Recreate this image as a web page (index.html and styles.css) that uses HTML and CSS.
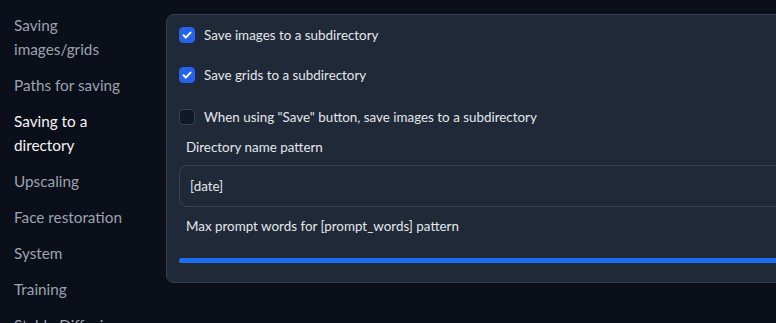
FILE: index.html
```html
<!DOCTYPE html>
<html lang="en">
<head>
    <meta charset="UTF-8">
    <title>Settings - Saving to a directory</title>
    <link rel="stylesheet" href="styles.css">
</head>
<body>
    <div class="layout">
        <!-- Side menu of the settings sections -->
        <nav class="sidebar">
            <div class="nav-item">Saving images/grids</div>
            <div class="nav-item">Paths for saving</div>
            <div class="nav-item active">Saving to a directory</div>
            <div class="nav-item">Upscaling</div>
            <div class="nav-item">Face restoration</div>
            <div class="nav-item">System</div>
            <div class="nav-item">Training</div>
            <div class="nav-item">Stable Diffusion</div>
        </nav>

        <!-- Settings panel -->
        <section class="panel">
            <label class="check-row">
                <span class="box checked">
                    <svg viewBox="0 0 16 16" width="16" height="16"><path d="M4.5 8.3l2.3 2.3 4.7-5" fill="none" stroke="#fff" stroke-width="2" stroke-linecap="round" stroke-linejoin="round"/></svg>
                </span>
                <span>Save images to a subdirectory</span>
            </label>
            <label class="check-row">
                <span class="box checked">
                    <svg viewBox="0 0 16 16" width="16" height="16"><path d="M4.5 8.3l2.3 2.3 4.7-5" fill="none" stroke="#fff" stroke-width="2" stroke-linecap="round" stroke-linejoin="round"/></svg>
                </span>
                <span>Save grids to a subdirectory</span>
            </label>
            <label class="check-row">
                <span class="box"></span>
                <span>When using "Save" button, save images to a subdirectory</span>
            </label>

            <div class="field-label">Directory name pattern</div>
            <div class="text-input">[date]</div>

            <div class="field-label second">Max prompt words for [prompt_words] pattern</div>
            <div class="slider"><div class="slider-track"></div></div>
        </section>
    </div>
</body>
</html>
```

FILE: styles.css
```css
/* General page */
body {
    margin: 0;
    background-color: #0b0f19;
    font-family: 'Lato', 'Open Sans', sans-serif;
    color: #e5e7eb;
    overflow: hidden;
    height: 323px;
}
.layout {
    display: flex;
    align-items: flex-start;
}

/* Side menu */
.sidebar {
    width: 125px;
    padding: 13px 0 0 14px;
    margin-right: 27px;
    flex-shrink: 0;
}
.nav-item {
    font-size: 15.3px;
    line-height: 24px;
    color: #9ca3af;
    margin-bottom: 12px;
}
.nav-item.active {
    color: #f3f4f6;
}

/* Panel */
.panel {
    margin-top: 14px;
    width: 660px;
    flex-shrink: 0;
    background-color: #1f2937;
    border: 1px solid #374151;
    border-radius: 8px;
    padding: 0 12px 19px 12px;
    box-sizing: border-box;
    font-size: 13.4px;
}
.check-row {
    display: flex;
    align-items: center;
    height: 40px;
    gap: 9px;
}
.check-row:last-of-type {
    margin-top: 2px;
}
.box {
    width: 16px;
    height: 16px;
    border-radius: 4px;
    background-color: #111827;
    border: 1px solid #374151;
    box-sizing: border-box;
    display: flex;
}
.box.checked {
    background-color: #2563eb;
    border-color: #2563eb;
}
.box svg {
    margin: -1px;
}
.field-label {
    padding-left: 7px;
    height: 20px;
    line-height: 20px;
}
.field-label.second {
    margin-top: 9px;
}
.text-input {
    margin-top: 8px;
    height: 42px;
    box-sizing: border-box;
    border: 1px solid #374151;
    border-radius: 8px;
    padding: 0 10px;
    line-height: 40px;
}
.slider {
    margin-top: 22px;
    height: 5px;
}
.slider-track {
    height: 5px;
    border-radius: 3px;
    background-color: #1a6ef0;
}
```
